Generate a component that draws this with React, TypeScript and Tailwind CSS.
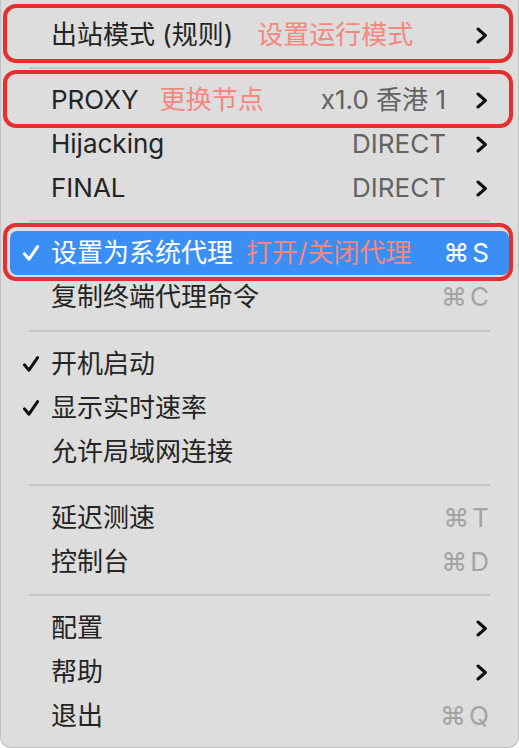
import React from "react";

type Item = {
  label: string;
  check?: boolean;
  note?: string;
  noteGap?: string;
  right?: string;
  shortcut?: string;
  submenu?: boolean;
  highlight?: boolean;
  box?: string;
};

const Check = () => (
  <svg width="18" height="18" viewBox="0 0 18 18" fill="none">
    <path d="M2.4 9.8 L7 15.2 L15.6 2.6" stroke="currentColor" strokeWidth="3" strokeLinecap="round" strokeLinejoin="round" />
  </svg>
);

const Chevron = () => (
  <svg width="12" height="17" viewBox="0 0 12 17" fill="none">
    <path d="M2 2 L9.4 8.5 L2 15" stroke="currentColor" strokeWidth="3" strokeLinecap="round" strokeLinejoin="round" />
  </svg>
);

const MenuRow = ({ item }: { item: Item }) => {
  const hl = item.highlight;
  return (
    <div className="relative h-[44px]">
      {item.box && <div className={`absolute ${item.box} left-[2px] right-[5px] rounded-[13px] border-[4px] border-[#e2302f]`} />}
      <div className={`flex h-full items-center mx-[9px] pl-[12px] rounded-[7px] ${hl ? "bg-[#3b8ff4] text-white" : "text-[#242424]"}`}>
        <span className={`w-[29px] shrink-0 ${hl ? "text-white" : "text-[#111]"}`}>{item.check && <Check />}</span>
        <span className="whitespace-nowrap">{item.label}</span>
        {item.note && <span className={`${item.noteGap} whitespace-nowrap text-[#f5877f]`}>{item.note}</span>}
        <div className="flex-1" />
        {item.right && <span className="whitespace-nowrap text-[#636363]">{item.right}</span>}
        {item.submenu && (
          <span className="ml-[30px] mr-[21px] text-[#111] flex items-center">
            <Chevron />
          </span>
        )}
        {item.shortcut && (
          <span className={`mr-[20px] flex gap-[3px] whitespace-nowrap ${hl ? "text-white" : "text-[#a3a3a3]"}`}>
            <span>⌘</span>
            <span>{item.shortcut}</span>
          </span>
        )}
      </div>
    </div>
  );
};

const Sep = ({ h }: { h: string }) => (
  <div className={`${h} flex items-center`}>
    <div className="h-[2px] w-full ml-[28px] mr-[28px] bg-[#c5c5c5]" />
  </div>
);

export default function App() {
  return (
    <div
      className="w-[519px] h-[748px] bg-[#dcdddc] border-x border-b border-[#c2c2c2] rounded-b-[11px] pt-[13px] text-[26px] leading-none overflow-hidden"
      style={{ fontFamily: 'Inter, "Noto Sans CJK SC", "DejaVu Sans", sans-serif' }}
    >
      <MenuRow item={{ label: "出站模式 (规则)", note: "设置运行模式", noteGap: "ml-[24px]", submenu: true, box: "-top-[9px] -bottom-[6px]" }} />
      <Sep h="h-[21px]" />
      <MenuRow item={{ label: "PROXY", note: "更换节点", noteGap: "ml-[21px]", right: "x1.0 香港 1", submenu: true, box: "-top-[8px] -bottom-[6px]" }} />
      <MenuRow item={{ label: "Hijacking", right: "DIRECT", submenu: true }} />
      <MenuRow item={{ label: "FINAL", right: "DIRECT", submenu: true }} />
      <Sep h="h-[21px]" />
      <MenuRow item={{ label: "设置为系统代理", check: true, note: "打开/关闭代理", noteGap: "ml-[13px]", shortcut: "S", highlight: true, box: "-top-[8px] -bottom-[6px]" }} />
      <MenuRow item={{ label: "复制终端代理命令", shortcut: "C" }} />
      <Sep h="h-[23px]" />
      <MenuRow item={{ label: "开机启动", check: true }} />
      <MenuRow item={{ label: "显示实时速率", check: true }} />
      <MenuRow item={{ label: "允许局域网连接" }} />
      <Sep h="h-[22px]" />
      <MenuRow item={{ label: "延迟测速", shortcut: "T" }} />
      <MenuRow item={{ label: "控制台", shortcut: "D" }} />
      <Sep h="h-[22px]" />
      <MenuRow item={{ label: "配置", submenu: true }} />
      <MenuRow item={{ label: "帮助", submenu: true }} />
      <MenuRow item={{ label: "退出", shortcut: "Q" }} />
    </div>
  );
}
